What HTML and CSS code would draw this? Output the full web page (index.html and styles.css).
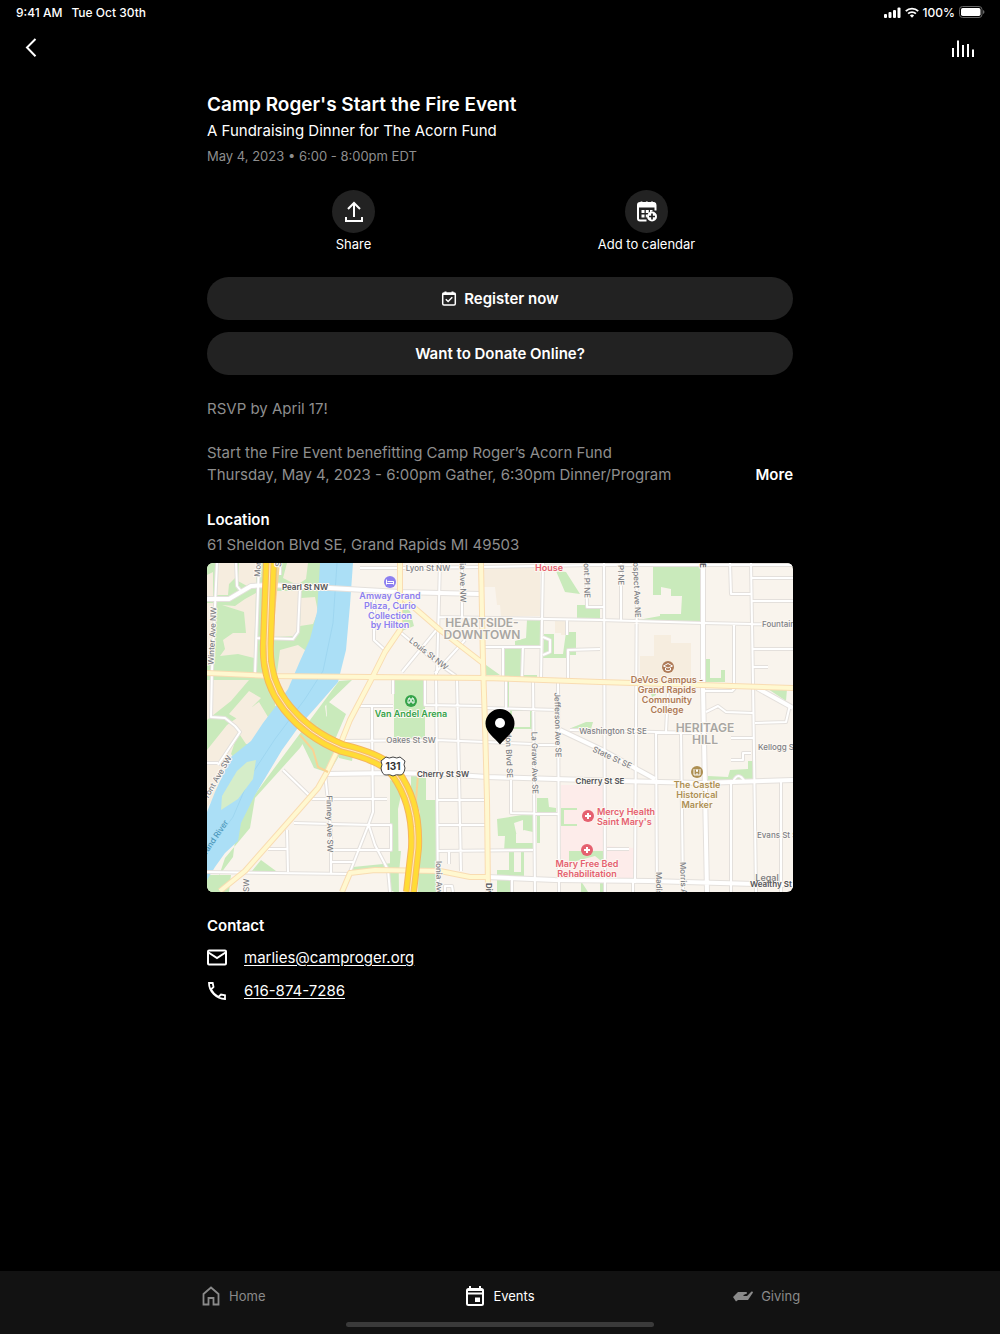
FILE: index.html
```html
<!DOCTYPE html>
<html lang="en">
<head>
  <meta charset="UTF-8">
  <meta name="viewport" content="width=device-width, initial-scale=1">
  <title>Camp Roger's Start the Fire Event</title>
  <link rel="stylesheet" href="styles.css">
</head>
<body>
  <div class="status">
    <span>9:41 AM</span>
    <span>Tue Oct 30th</span>
    <div class="status-right">
      <svg width="17" height="11" viewBox="0 0 17 11" fill="#fff"><rect y="7" width="3" height="4" rx="1"/><rect x="4.5" y="5" width="3" height="6" rx="1"/><rect x="9" y="3" width="3" height="8" rx="1"/><rect x="13.5" y="0.5" width="3" height="10.5" rx="1"/></svg>
      <svg width="14" height="11" viewBox="0 0 14 11" fill="none" stroke="#fff" stroke-width="1.9"><path d="M.8 4.2a8.8 8.8 0 0 1 12.4 0M3.1 6.7a5.5 5.5 0 0 1 7.8 0"/><path d="M7 10.7 4.900 8.600a3 3 0 0 1 4.200 0z" fill="#fff" stroke="none"/></svg>
      <span>100%</span>
      <svg width="26" height="12" viewBox="0 0 26 12"><rect x=".5" y=".5" width="22.5" height="11" rx="3" fill="none" stroke="#666"/><rect x="2" y="2" width="19.5" height="8" rx="1.7" fill="#fff"/><path d="M24 4c2 .8 2 3.200 0 4z" fill="#666"/></svg>
    </div>
  </div>

  <header class="topbar">
    <button class="icon-btn" aria-label="Back"><svg width="24" height="24" viewBox="0 0 24 24" fill="none" stroke="#fff" stroke-width="2"><path d="M16.500 3 8 11.500l8.500 8.800"/></svg></button>
    <button class="icon-btn" aria-label="Now playing"><svg width="24" height="24" viewBox="0 0 24 24" fill="#fff"><path d="M1 12h2v9H1zM6 4.500h2V21H6zM11 9h2v12h-2zM16 8h2v13h-2zM21 13.500h2V21h-2z"/></svg></button>
  </header>

  <main class="event">
    <h1>Camp Roger's Start the Fire Event</h1>
    <p class="subtitle">A Fundraising Dinner for The Acorn Fund</p>
    <p class="date">May 4, 2023 • 6:00 - 8:00pm EDT</p>

    <div class="actions">
      <button class="action">
        <span class="circle"><svg width="24" height="24" viewBox="0 0 24 24" fill="none" stroke="#fff" stroke-width="2"><path d="M12 17V4M6 9 12 3l6 6M4 17v4h16v-4"/></svg></span>
        Share
      </button>
      <button class="action">
        <span class="circle">
          <svg width="24" height="24" viewBox="0 0 24 24">
            <path d="M6.500 1.500v3M11.800 1.500v3M17 1.500v3" stroke="#fff" stroke-width="1.800"/>
            <path d="M11.500 20.500H5a2 2 0 0 1-2-2V5a2 2 0 0 1 2-2h14a2 2 0 0 1 1.500 2v5.500" fill="none" stroke="#fff" stroke-width="2"/>
            <path d="M3 3.500h17.500v4H3z" fill="#fff"/>
            <path d="M6.500 10h3v3h-3zM10.800 10h3v3h-3zM6.500 14.500h3v3h-3zM15 10h2.500v1L15 12.500zM10.800 14.500h1.500l-.6 3h-.9z" fill="#fff"/>
            <circle cx="17" cy="16.500" r="5" fill="#fff"/>
            <path d="M17 13.500v6M14 16.500h6" stroke="#222" stroke-width="1.700"/>
          </svg>
        </span>
        Add to calendar
      </button>
    </div>

    <button class="pill">
      <svg width="16" height="16" viewBox="0 0 16 16" fill="none" stroke="#fff" stroke-width="1.5"><rect x="1.700" y="2" width="12.600" height="12" rx="1.200"/><path d="M1.700 3h12.600M4.500 .5v2M11.500 .5v2" stroke-width="2"/><path d="m4.800 8.200 2.300 2.300 4.200-4.300"/></svg>
      Register now
    </button>
    <button class="pill">Want to Donate Online?</button>

    <div class="about">
      <p>RSVP by April 17!<br><br>Start the Fire Event benefitting Camp Roger’s Acorn Fund<br>Thursday, May 4, 2023 - 6:00pm Gather, 6:30pm Dinner/Program</p>
      <button class="more">More</button>
    </div>

    <h2>Location</h2>
    <p class="address">61 Sheldon Blvd SE, Grand Rapids MI 49503</p>

    <svg class="map" viewBox="207 563 586 329" preserveAspectRatio="xMidYMid slice" role="img" aria-label="Map of downtown Grand Rapids">
      <defs>
        <path id="minor" d="M217 563l-5 107-1 47 14 1 10 8 5 6-12 18-10 15M207 763h11M236 563l1 23 4 5M259 563l-4 110M280 563v12M300 588l-2 44-5 7-36-1M360 568h40l80-1 113-2h200M374 600v40l12 11M360 706h33M372 706v19l1 87-5 14-18 46M393 680v14M440 563l-3 110M462 563v55M402 672l36-44M400 632l36 30 20 14M435 673l30-33M543 563l-2 116M586 563l1 44h13M438 617l162 3 103 3 90 2M425 680v25l58 1M436 673l2 219M457 680l4 191M484 647h58M503 647v31M523 647l-1 31M568 680v-30l32-1M567 620v15M543 637l7 3v12l-7 3M506 680v28M533 680l2 212M558 680l1 212M486 708l72 2M343 741l93-1 122 5M604 563l1 329M621 563v57M637 563l-2 320M730 563l1 31h20M751 563l2 120 3 209M751 578h42M752 601h41M753 649h40M753 667h15M734 625v60M604 607h-12M706 712l12-6 8 6 27 1M735 688l-3 3h-27M755 723l31-1 4-17M668 690l-2 42M731 783v109M681 733l2 159M781 780v112M656 732l1 160M570 730l130 3M731 738h23M731 760h12v-7h8M607 849h22M325 773l6 57v43M283 770l30 29h74M294 823l77 2h20v25h-60M287 830l1 42M268 849h20M369 826l6 19 13 25 2 22M330 862h23M438 800h49M438 825h49M438 851l95-1M449 851v13M511 780v33l48 1M512 880v12M207 872l143 2M445 892v-6h7l1 6M633 882v10M361 568h10M733 782q5-12 12 0M372 725v16"/>
        <path id="medium" d="M207 599h22l22-13 19-1 60 3 70 4 80 2M326 774l67-1 50 1 44 3 68 2 65 2 80 2 93-3M487 877l68 3 95 1 143 4M703 563v125l4 204M560 730l40 19 55 30M757 688l36 20"/>
        <path id="yellow" d="M207 673l63 3 100 1 115 1 115 4 100 3 93 3M481 563l2 100 2 62 2 75 1 92M403 598l37 32 44 34M400 563v67l-15 22-14 28-21 40-10 25-13 27-9 16-28 32-45 51-25 20M342 892l8-19 25-3 65 1 30 6h18"/>
        <path id="us131" d="M270 563l-3 80q-2 38 20 65 22 27 55 40 42 10 53 25 22 30 20 75l-5 44"/>
      </defs>
      <rect x="207" y="563" width="586" height="329" fill="#f9f4ed"/>

      <!-- west bank -->
      <path class="park" d="M207 563h115l-3 75-17 42-37 50-58 60z"/>
      <g class="block">
        <path d="M218 563h17v15l-6 6-1 11h-11zM239 563h17v22l-9 1-9-5zM207 575l6-3v24h-6zM207 603h9l-3 47-6 10zM222 605l13 1 10-7 11-6-2 65-16-4-18 2 5-7-2-9 10-7h13l-2-21z"/>
        <path d="M276 591h23l-2 45-25 1zM287 563h21l-2 16-9 6-14-7zM301 598l14-1 3 15-5 12-13 2zM280 650l18-5 11 8v11l-10 18-17 13-6-15z"/>
        <path d="M207 680h42l-18 21-24 19zM249 691l12 7-22 22-10-6zM276 681h23l-16 25-8 0zM259 702l9 15-33 50-12 20-16 20v-57l20-25z"/>
      </g>
      <path class="park" d="M238 732l8 12 12 1-20 18-7-9z"/>

      <!-- other parks -->
      <g class="park">
        <path d="M339 681l13-1-27 26 2 15-14 7-13 20-45 50-5 30-25 30-18 54-4-15 30-40 5-40z"/>
        <path d="M304 733l38 18-13 22-15-5-14-29zM326 700l1 16-18 18 25 8 12-28zM338 749l16 1-2 11-13-3z"/>
        <path d="M394 680h31v62h-31zM390 780l21 8v-15h27l1 15-3 104h-18l2-80-15-35-7 32 1 85-9-4zM261 860l15 11h-24z"/>
        <path d="M353 867l40-4v-12h8l-2 22-48-1zM207 875h24l-2 17h-22zM400 605l10 6 4 15-12 5z"/>
        <path d="M556 571l10 1 14 22-15-2zM577 605h23v14h-23zM527 620h14v27h-26v-6l11-3zM503 648h19v30h-19zM486 665l14 10h-14zM523 675h14v3h-14z"/>
        <path d="M544 634h10v20h9l3-22h10v23h-10v3h-23z"/>
        <path d="M653 565h48v58l-63-3 22-4v-2h21l1-18h-11v-7l-10-2v8h-8zM706 659h4v19h11v-8h4v12h-19zM768 689h19l-1 12zM708 776l20 1 2-7 18-1v-8h5v19l-45 1z"/>
        <path d="M664 675h18l-8 7h-10zM649 687h6l1 8-4 2zM537 798h11l1 9 7 1v5h-19zM497 819l37-6v37l-30 1 1-15h-7zM509 850h15v28h-15zM497 870h12l4 22h-16zM600 855h5v37h-5zM571 728l15-6h7l-2 7z"/>
        <path d="M510 709h22v20h-22zM507 680h2v28h-2zM581 881l7 11h-7zM537 813h3v30h-3z"/>
      </g>
      <path class="block" d="M483 568h57v48h-39l-1-11h-3l-2-18h-12zM555 621h10v14h-10zM654 635h17v8h20v40h-51v-27h14z"/>
      <path class="land" d="M426 775h12v25h-12zM514 823l9-3v13l-6 4zM516 834l8-4 9 2v11h-17zM514 852h7v20h-7zM512 711h18v16h-18zM540 785h15v12h-15zM555 633h6v18h-6z"/>
      <path fill="#fdecea" d="M561 785h44l1 61 28 2v30h-73z"/>
      <path class="park" d="M561 808h16v2h-13v14h13v2h-16zM569 851h36v13l-10-8-26 7z"/>

      <!-- Grand River -->
      <path class="river" d="M320 563h33l-3 42-4 45-8 32-20 23-18 20-18 25-27 45-14 28-3 18-13 12-10 14-8 13v-68l8-20 16-35 20-16 12-18 13-17 12-17 12-28 10-22 7-27z"/>
      <path d="M337 563l-4 60-10 48-18 28-30 40-25 38-17 40-26 35" fill="none" stroke="#9ed6f0"/>
      <path d="M256 760l-3 19-15 20-17 11 1-14 15-25 10-9z" fill="#d5edc9"/>

      <g class="roads">
        <use href="#minor" class="minor-edge"/>
        <use href="#medium" class="medium-edge"/>
        <use href="#minor" class="minor"/>
        <use href="#medium" class="medium"/>
        <use href="#yellow" class="yellow-edge"/>
        <use href="#yellow" class="yellow"/>
        <path class="ramp" d="M279 563l-4 40-5 60M300 735l13 15 5 17 10 5M404 780q12 20 14 55M418 775l-2 25"/>
        <use href="#us131" stroke="#f5b65c" stroke-width="14"/>
        <use href="#us131" stroke="#ffdc35" stroke-width="12"/>
        <use href="#us131" stroke="#f9bd62" stroke-width="3"/>
        <use href="#us131" stroke="#fdebc4" stroke-width="1"/>
      </g>

      <g class="street">
        <text x="428" y="571">Lyon St NW</text>
        <text x="411" y="743">Oakes St SW</text>
        <text x="613" y="734">Washington St SE</text>
        <text class="start" x="762" y="627">Fountain</text>
        <text class="start" x="758" y="750">Kellogg St</text>
        <text class="start" x="757" y="838">Evans St SE</text>
        <text transform="translate(215 636) rotate(-87)">Winter Ave NW</text>
        <text class="start" transform="translate(260 577) rotate(-87)">Monroe</text>
        <text transform="translate(427 656) rotate(38)">Louis St NW</text>
        <text transform="translate(460 577) rotate(89)">Ionia Ave NW</text>
        <text transform="translate(584 571) rotate(89)">Fremont PI NE</text>
        <text class="start" transform="translate(618 565) rotate(89)">PI NE</text>
        <text transform="translate(634 586) rotate(88)">Prospect Ave NE</text>
        <text transform="translate(555 725) rotate(89)">Jefferson Ave SE</text>
        <text transform="translate(532 763) rotate(89)">La Grave Ave SE</text>
        <text transform="translate(506 747) rotate(88)">Sheldon Blvd SE</text>
        <text transform="translate(611 760) rotate(25)">State St SE</text>
        <text transform="translate(327 824) rotate(89)">Finney Ave SW</text>
        <text transform="translate(219 780) rotate(-60)">Front Ave SW</text>
        <text class="start" transform="translate(249 892) rotate(-89)">SW</text>
        <text class="start" transform="translate(436 861) rotate(89)">Ionia Ave</text>
        <text class="start" transform="translate(656 872) rotate(89)">Madison</text>
        <text class="start" transform="translate(680 862) rotate(88)">Morris Ave</text>
        <text class="start" transform="translate(281 567) rotate(-87)">S</text>
      </g>
      <g class="street main">
        <text x="305" y="590">Pearl St NW</text>
        <text x="443" y="777">Cherry St SW</text>
        <text x="600" y="784">Cherry St SE</text>
        <text class="start" x="750" y="887">Wealthy St</text>
        <text class="start" transform="translate(486 883) rotate(90)">Division</text>
        <text class="start" transform="translate(700 563) rotate(90)">E</text>
      </g>
      <a href="#legal"><text class="legal" x="767" y="881">Legal</text></a>
      <text class="water" transform="translate(216 841) rotate(-56)">Grand River</text>

      <g class="district">
        <text x="482" y="627">HEARTSIDE-</text><text x="482" y="639">DOWNTOWN</text>
        <text x="705" y="732">HERITAGE</text><text x="705" y="744">HILL</text>
      </g>

      <g class="place hotel">
        <circle cx="390" cy="582" r="6"/>
        <path d="M386.500 579.500v5M386.500 583.500h7v-2h-6M393.500 581.500v3" fill="none" stroke="#fff"/>
        <text x="390" y="599">Amway Grand</text><text x="390" y="609">Plaza, Curio</text><text x="390" y="619">Collection</text><text x="390" y="628">by Hilton</text>
      </g>
      <g class="place arena">
        <circle cx="411" cy="701" r="6"/>
        <path d="M408 703v-3l1-2h1v2h2v-2h1l1 2v3h-2v-2h-2v2z" fill="none" stroke="#fff"/>
        <text x="411" y="717">Van Andel Arena</text>
      </g>
      <g class="place school">
        <circle cx="668" cy="667" r="6"/>
        <path d="M663.500 666l4.500-2.500 4.500 2.500-4.500 2zM665.500 668v2q2.500 1.500 5 0v-2" fill="none" stroke="#fff"/>
        <text x="667" y="683">DeVos Campus -</text><text x="667" y="693">Grand Rapids</text><text x="667" y="703">Community</text><text x="667" y="713">College</text>
      </g>
      <g class="place marker">
        <circle cx="697" cy="772" r="6"/>
        <path d="M694 769v6h6v-6M696 769l1 3 1-3M697 775v-2" fill="none" stroke="#fff"/>
        <text x="697" y="788">The Castle</text><text x="697" y="798">Historical</text><text x="697" y="808">Marker</text>
      </g>
      <g class="place health">
        <circle cx="588" cy="816" r="6"/><circle cx="587" cy="850" r="6"/>
        <path d="M588 813v6M585 816h6M587 847v6M584 850h6" stroke="#fff" stroke-width="2"/>
        <text class="start" x="597" y="815">Mercy Health</text><text class="start" x="597" y="825">Saint Mary's</text>
        <text x="587" y="867">Mary Free Bed</text><text x="587" y="877">Rehabilitation</text>
        <text x="549" y="571">House</text>
      </g>

      <path d="M386 757q3 2 7 0 4 2 7 0l5 4q-2 4 0 7-1 7-5 7-4-1-7 1-3-2-7-1-4 0-5-7 2-3 0-7z" fill="#fff" stroke="#444"/>
      <text class="shield" x="393" y="770">131</text>

      <path d="M500 709a14.500 14.500 0 0 1 14.500 14.500c0 9-9 14-14.500 21-5.500-7-14.500-12-14.500-21A14.500 14.500 0 0 1 500 709z" fill="#000"/>
      <circle cx="500" cy="723" r="5" fill="#fff"/>
    </svg>

    <h2>Contact</h2>
    <ul class="contact">
      <li>
        <svg width="20" height="20" viewBox="0 0 20 20" fill="none" stroke="#fff" stroke-width="2"><rect x="1" y="2.500" width="18" height="14" rx="1"/><path d="m1.500 4.500 8.500 5.500 8.500-5.500"/></svg>
        <a href="mailto:marlies@camproger.org">marlies@camproger.org</a>
      </li>
      <li>
        <svg width="20" height="20" viewBox="0 0 20 20" fill="none" stroke="#fff" stroke-width="1.8"><path d="M2 2h3.700l.8 4-2.500 2.500c1.600 3.200 4.200 5.800 7.500 7.500l2.500-2.500 4 .8V18C9.500 18 2 10.500 2 2z"/></svg>
        <a href="tel:6168747286">616-874-7286</a>
      </li>
    </ul>
  </main>

  <nav class="tabs">
    <a href="#home"><svg width="20" height="20" viewBox="0 0 20 20" fill="none" stroke="#8a8a8a" stroke-width="1.8"><path d="M2.500 18.500V8L10 1.500 17.500 8v10.500h-5V12h-5v6.500z"/></svg>Home</a>
    <a href="#events" class="active" aria-current="page"><svg width="20" height="20" viewBox="0 0 20 20" fill="none" stroke="#fff" stroke-width="2"><rect x="2" y="3" width="16" height="16" rx="1.500"/><path d="M5 0v4M15 0v4M2 4h16M2 7.500h16"/><path d="M10 11.500h5V16h-5z" fill="#fff" stroke="none"/></svg>Events</a>
    <a href="#giving"><svg width="20" height="20" viewBox="0 0 20 20" fill="#8a8a8a"><path d="M0 11 5 6h8q1.500.2 1 1.600L10.500 9v1H14l4.500-4.500q1.500-.2 1.500 1L15 14H5l-2 1.500z"/></svg>Giving</a>
    <div class="home-bar"></div>
  </nav>
</body>
</html>
```

FILE: styles.css
```css
* { box-sizing: border-box; }
body { margin: 0; min-height: 100vh; display: flex; flex-direction: column; background: #000; color: #fff; font-family: Inter, "Liberation Sans", sans-serif; font-size: 15px; }
h1, h2, p, ul { margin: 0; padding: 0; }
button { border: 0; padding: 0; background: none; color: inherit; font: inherit; cursor: pointer; }
a { color: inherit; }
svg { flex: none; }

.status { display: flex; align-items: center; gap: 9px; height: 24px; padding: 0 15px 0 16px; font-size: 12px; font-weight: 500; }
.status-right { display: flex; align-items: center; gap: 4px; margin-left: auto; }
.topbar { display: flex; justify-content: space-between; height: 48px; padding: 0 25px 0 19px; }
.icon-btn { display: flex; align-items: center; }

.event { width: 100%; max-width: 586px; margin: 0 auto; padding: 20px 0 24px; flex: 1; }
h1 { font-size: 19px; line-height: 26px; font-weight: 600; }
.subtitle { line-height: 26px; }
.date { font-size: 13px; line-height: 24px; color: #8e8e8e; }

.actions { display: grid; grid-template-columns: 1fr 1fr; margin: 22px 0; }
.action { display: flex; flex-direction: column; align-items: center; font-size: 13px; line-height: 22px; }
.circle { display: flex; align-items: center; justify-content: center; width: 43px; height: 43px; border-radius: 50%; background: #222; }

.pill { display: flex; align-items: center; justify-content: center; gap: 7px; width: 100%; height: 43px; border-radius: 22px; background: #222; font-weight: 600; }
.pill + .pill { margin-top: 12px; }

.about { display: flex; align-items: flex-end; justify-content: space-between; margin: 23px 0 21px; line-height: 22px; color: #8e8e8e; }
.more { color: #fff; font-weight: 600; }
h2 { font-size: 15px; line-height: 26px; font-weight: 600; }
.address { line-height: 24px; color: #8e8e8e; }

.map { display: block; width: 100%; margin: 6px 0 21px; border-radius: 6px; font-size: 8px; font-weight: 500; }
.map text { text-anchor: middle; paint-order: stroke; stroke: #fcf8f2; stroke-width: 2px; stroke-linejoin: round; }
.map text.start { text-anchor: start; }
.park { fill: #c9eabb; }
.block { fill: #f6eddf; }
.land { fill: #f9f4ed; }
.river { fill: #abdff6; }
.roads { fill: none; stroke-linejoin: round; }
.minor-edge { stroke: #e4e0dc; stroke-width: 4; }
.minor { stroke: #fff; stroke-width: 2; }
.medium-edge { stroke: #e4e0dc; stroke-width: 6; }
.medium { stroke: #fff; stroke-width: 4; }
.yellow-edge { stroke: #f9dcb2; stroke-width: 6; }
.yellow { stroke: #fff8d0; stroke-width: 4; }
.ramp { stroke: #f9d393; stroke-width: 2; }
.street { fill: #7e8085; }
.street.main { fill: #505257; font-weight: 600; }
.map .legal { fill: #77787a; stroke: none; font-size: 9px; }
.map .water { fill: #4c98bb; stroke: none; }
.district { fill: #a8a6a2; font-size: 12px; font-weight: 600; }
.place { font-size: 9px; font-weight: 600; }
.hotel { fill: #8c7ff0; }
.arena { fill: #35a34a; }
.school { fill: #ae7a57; }
.marker { fill: #ad8f52; }
.health { fill: #e5606f; }
.map .shield { fill: #333; stroke: none; font-size: 10px; font-weight: 700; }

.contact { list-style: none; padding-top: 2px; }
.contact li { display: flex; align-items: center; gap: 17px; height: 33px; }
.contact a { text-underline-offset: 2px; }

.tabs { display: grid; grid-template-columns: repeat(3, 1fr); padding: 7px 10%; background: #121212; }
.tabs a { display: flex; align-items: center; justify-content: center; gap: 8px; height: 35px; font-size: 13px; color: #8a8a8a; text-decoration: none; }
.tabs a.active { color: #fff; }
.home-bar { grid-column: 1 / -1; justify-self: center; width: 308px; height: 5px; margin-top: 9px; border-radius: 3px; background: #3a3a3a; }
```
